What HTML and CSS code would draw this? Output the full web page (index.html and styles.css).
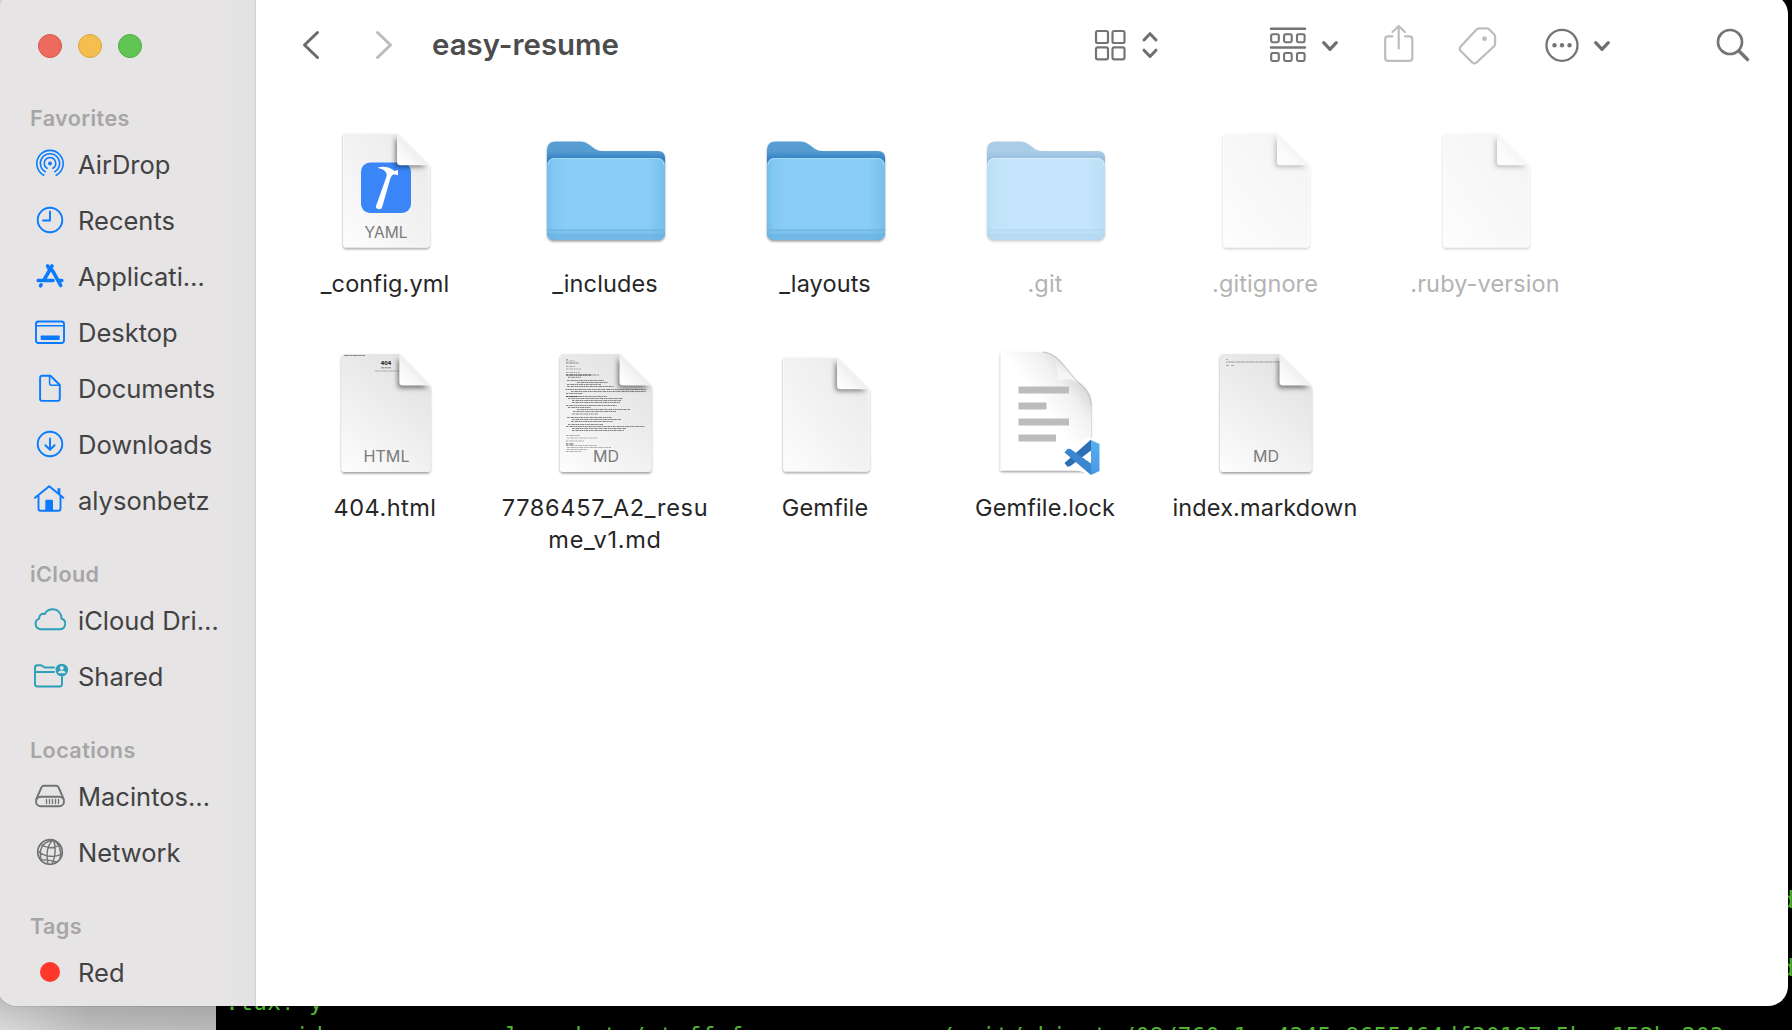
FILE: index.html
```html
<!DOCTYPE html>
<html lang="en">
<head>
<meta charset="utf-8">
<title>easy-resume</title>
<link rel="stylesheet" href="styles.css">
</head>
<body>
<svg class="defs" width="0" height="0" aria-hidden="true">
  <defs>
    <linearGradient id="paper" x1="0" y1="1" x2="1" y2="0">
      <stop offset="0" stop-color="#fdfdfd"/><stop offset=".45" stop-color="#f3f3f3"/><stop offset="1" stop-color="#e9e9e9"/>
    </linearGradient>
    <linearGradient id="thumb" x1="0" y1="1" x2=".6" y2="0">
      <stop offset="0" stop-color="#fdfdfd"/><stop offset=".3" stop-color="#f5f5f5"/><stop offset="1" stop-color="#e3e3e3"/>
    </linearGradient>
    <linearGradient id="curl" x1="0" y1="1" x2=".6" y2=".4">
      <stop offset="0" stop-color="#ffffff"/><stop offset=".5" stop-color="#f8f8f8"/><stop offset="1" stop-color="#e9e9e9"/>
    </linearGradient>
    <linearGradient id="folder-back" x1="0" y1="0" x2="0" y2="1">
      <stop offset="0" stop-color="#5a9fd3"/><stop offset=".1" stop-color="#559bd0"/><stop offset=".19" stop-color="#2f7cc2"/><stop offset="1" stop-color="#2f7cc2"/>
    </linearGradient>
    <linearGradient id="folder-front" x1="0" y1="0" x2="1" y2="0">
      <stop offset="0" stop-color="#72bdea"/><stop offset=".06" stop-color="#84c9f4"/><stop offset=".2" stop-color="#8acdf8"/><stop offset=".85" stop-color="#8acdf8"/><stop offset="1" stop-color="#76bfeb"/>
    </linearGradient>
    <linearGradient id="code-right" x1="0" y1="0" x2="0" y2="1">
      <stop offset="0" stop-color="#55b0ee"/><stop offset="1" stop-color="#4a97e6"/>
    </linearGradient>
    <linearGradient id="lock-curl" x1="0" y1="1" x2=".8" y2="0">
      <stop offset="0" stop-color="#fff"/><stop offset=".5" stop-color="#f4f4f4"/><stop offset="1" stop-color="#b8b8b8"/>
    </linearGradient>
    <linearGradient id="lock-paper" x1="0" y1="1" x2="1" y2="0">
      <stop offset=".5" stop-color="#fff"/><stop offset=".7" stop-color="#f1f1f1"/><stop offset=".85" stop-color="#d2d2d2"/>
    </linearGradient>
    <filter id="drop" x="-10%" y="-10%" width="120%" height="125%">
      <feDropShadow dx="0" dy="1.5" stdDeviation="1.1" flood-color="#000" flood-opacity=".4"/>
    </filter>
    <filter id="soft" x="-40%" y="-40%" width="180%" height="180%"><feGaussianBlur stdDeviation="2.8"/></filter>
    <clipPath id="paper-clip"><path d="M24.500 7.500H76L108 39.500V119q0 2-2 2H24.500q-2 0-2-2V9.500q0-2 2-2z"/></clipPath>
    <clipPath id="thumb-clip"><path d="M23 4H78.500L110.500 36V118.500q0 3.500-3.500 3.500H22.500q-3.500 0-3.500-3.500V7.500Q19 4 22.500 4z"/></clipPath>

    <symbol id="doc" viewBox="0 0 128 128">
      <g filter="url(#drop)"><path fill="url(#paper)" stroke="#fafafa" d="M24.500 7.500H76L108 39.500V119q0 2-2 2H24.500q-2 0-2-2V9.500q0-2 2-2z"/></g>
    </symbol>
    <symbol id="doc-fold" viewBox="0 0 128 128">
      <g clip-path="url(#paper-clip)"><path fill="#000" opacity=".5" filter="url(#soft)" d="M74.500 11V39q0 2 2 2H105z"/></g>
      <path fill="url(#curl)" d="M76 7.500L108 39.200H79.500q-3.500 0-3.500-3.500z"/>
    </symbol>
    <symbol id="sheet" viewBox="0 0 128 128">
      <g filter="url(#drop)"><path fill="url(#thumb)" d="M22.500 4H78.500L110.500 36V118.500q0 3.500-3.500 3.500H22.500q-3.500 0-3.500-3.500V7.500Q19 4 22.500 4z"/></g>
    </symbol>
    <symbol id="sheet-fold" viewBox="0 0 128 128">
      <g clip-path="url(#thumb-clip)"><path fill="#000" opacity=".5" filter="url(#soft)" d="M77 8V36q0 2 2 2H108z"/></g>
      <path fill="url(#curl)" d="M78.500 4L110.500 35.500H82q-3.500 0-3.500-3.500z"/>
    </symbol>
    <symbol id="folder" viewBox="0 0 128 128">
      <g filter="url(#drop)">
        <path fill="url(#folder-back)" d="M6 24q0-8.500 8.500-8.500H40q4 0 8 3l6 4.500q3 2 7 2H117q7 0 7 7V106q0 8-8 8H14q-8 0-8-8z"/>
        <path fill="url(#folder-front)" d="M6 40q0-8 8-8H116q8 0 8 8V106q0 8-8 8H14q-8 0-8-8z"/>
      </g>
      <path fill="none" stroke="#a4daf9" d="M7 39.500q.5-7 7-7H116q6.500 0 7 7"/>
      <path fill="#6db5e3" opacity=".45" d="M6 103H124V106q0 8-8 8H14q-8 0-8-8z"/>
      <path fill="none" stroke="#62abd9" opacity=".5" d="M6 104H124M6.500 108.500H123.500"/>
      <path fill="#5aa4d6" opacity=".3" d="M7 109H123q-2 5-7 5H14q-5 0-7-5z"/>
    </symbol>
    <symbol id="chevron" viewBox="0 0 18 12"><path fill="none" stroke="#6f6f6f" stroke-width="3.200" stroke-linecap="round" stroke-linejoin="round" d="M2.700 2.700L9 9.300L15.300 2.700"/></symbol>
  </defs>
</svg>

<div class="desktop">
  <div class="shade"></div>
  <pre class="terminal"><span class="far">d</span>

<span class="far">d</span>
.tux? y
override r--r--r-- alysonbetz/staff for easy-resume/.git/objects/08/760a1cc4345c9655464df30197a5bce152bc203</pre>

  <div class="window">
    <aside class="sidebar">
      <div class="lights"><i class="light close"></i><i class="light minimize"></i><i class="light zoom"></i></div>

      <h2>Favorites</h2>
      <ul>
        <li><svg viewBox="-16 -16 32 32"><g fill="none" stroke-width="1.600" stroke-linecap="round"><path d="M-6.200 11.200A13.200 13.200 0 1 1 6.200 11.200"/><path d="M-4.700 7.700A9.600 9.600 0 1 1 4.700 7.700"/><path d="M-3 4.300A5.800 5.800 0 1 1 3 4.300"/></g><circle cy="-.5" r="1.900" class="solid"/></svg><span>AirDrop</span></li>
        <li><svg viewBox="-16 -16 32 32"><circle r="12.300"/><path d="M0-8.500V.5H-7"/></svg><span>Recents</span></li>
        <li><svg viewBox="-16 -16 32 32"><path stroke-width="3.600" d="M2-10L-6.200 4.300M-2.400-10L-1.200-8M2.700-5.200L10.700 9.500M-8.900 8.800L-9.400 9.800M-11.800 4.500H3M8.800 4.500H11.800"/></svg><span>Applicati…</span></li>
        <li><svg viewBox="-16 -16 32 32"><rect x="-14" y="-10.500" width="28" height="21.500" rx="2.500"/><path stroke-width="1.500" d="M-14-6.300H14"/><rect class="solid" x="-9.300" y="3.500" width="19" height="4.500" rx=".7"/></svg><span>Desktop</span></li>
        <li><svg viewBox="-16 -16 32 32"><path d="M-7.700-12.300H.4L9.800-3V10.700q0 2.200-2.200 2.200H-7.700q-2.200 0-2.200-2.200V-10q0-2.300 2.200-2.300z"/><path stroke-width="1.500" d="M-.4-12V-4.800q0 2 2 2H9.500"/></svg><span>Documents</span></li>
        <li><svg viewBox="-16 -16 32 32"><circle r="12.300"/><path d="M0-5.500V5.500M-4.600 1.200L0 5.700L4.600 1.200"/></svg><span>Downloads</span></li>
        <li><svg viewBox="-16 -16 32 32"><path d="M-15-2.200L-.8-13.800L13.300-2.200M-11.500-4V8.800q0 2 2 2H8.500q2 0 2-2V-4"/><path class="solid" d="M7.500-11.800H10.300V-4L7.500-6.500zM-4.700 11V1q0-1.200 1.200-1.200H1.800Q3 -.2 3 1V11z"/></svg><span>alysonbetz</span></li>
      </ul>

      <h2>iCloud</h2>
      <ul class="teal">
        <li><svg viewBox="-16 -16 32 32"><path d="M-9.500 9.200H9.600a5.500 5.500 0 0 0 1.900-10.700C11.500-7 7.800-10.700 3-10.700C-1-10.700-3.800-8.800-5.200-6C-8.500-7-11-4.500-10.900-1.400A5.500 5.500 0 0 0-9.500 9.200z"/></svg><span>iCloud Dri…</span></li>
        <li><svg class="wide" viewBox="-16 -16 35 32"><path d="M4-8.500H-5.500L-7-9.700q-1.500-1-3-1H-12.500q-2.500 0-2.500 2.500V8q0 2.500 2.500 2.500H9.500q2.500 0 2.500-2.500V1M-15-4H4"/><circle class="solid" cx="11.800" cy="-6" r="6.300"/><circle class="paper" cx="11.800" cy="-8" r="1.900"/><path class="paper" d="M8.100-2.800q0-2.800 3.700-2.800t3.700 2.800z"/></svg><span>Shared</span></li>
      </ul>

      <h2>Locations</h2>
      <ul class="gray">
        <li><svg viewBox="-16 -16 32 32"><path d="M-13.700 3.200L-8.600-8.500q.7-1.800 2.600-1.800H6q1.900 0 2.600 1.800L13.700 3.200"/><rect x="-14" y=".8" width="28" height="9.400" rx="4.700"/><path stroke-width="1.300" d="M-3.500 3.500V7.500M-.5 3.500V7.500M2.500 3.500V7.500M5.500 3.500V7.500M8.500 3.500V7.500"/></svg><span>Macintos…</span></li>
        <li><svg viewBox="-16 -16 32 32"><g stroke-width="1.400"><circle r="12.300" stroke-width="1.700"/><path d="M3.500-12C-2-8-4.500-1-2 12M3.500-12C6-6 6 4 2 12M3-12C-8-10-12-2-8.500 8.500M3-12C9-9 12-1 10 6.500M-9.500-7.500C-3-3.500 4-3.500 10-7M-12.300-1C-5 5.500 6 6 12.300 1M-9 8C-4 7.500 3 9 6.500 10"/></g></svg><span>Network</span></li>
      </ul>

      <h2>Tags</h2>
      <ul>
        <li><i class="dot"></i><span>Red</span></li>
      </ul>
    </aside>

    <main class="main">
      <header class="toolbar">
        <svg class="back" viewBox="300 28 24 34" width="24" height="34"><path stroke="#6a6a6a" stroke-width="3" d="M317.500 32.500L304.500 45L317.500 57.500"/></svg>
        <svg class="forward" viewBox="373 28 24 34" width="24" height="34"><path stroke="#bcbcbc" stroke-width="3" d="M377.500 32.500L390.500 45L377.500 57.500"/></svg>
        <h1>easy-resume</h1>
        <svg class="view" viewBox="1093 28 68 36" width="68" height="36"><g stroke="#747474" stroke-width="2.200"><rect x="1096" y="32" width="12" height="12" rx="1.800"/><rect x="1112.500" y="32" width="12" height="12" rx="1.800"/><rect x="1096" y="48.300" width="12" height="12" rx="1.800"/><rect x="1112.500" y="48.300" width="12" height="12" rx="1.800"/></g><path stroke="#6f6f6f" stroke-width="3" d="M1144 41L1150 34.700L1156 41M1144 51.200L1150 57.500L1156 51.200"/></svg>
        <svg class="group" viewBox="1268 26 40 38" width="40" height="38"><g stroke="#747474" stroke-width="2.400"><path d="M1271 28.700H1305M1271 47.500H1305"/><g stroke-width="2.100"><rect x="1271.200" y="34.200" width="7.600" height="8" rx="1.400"/><rect x="1284.100" y="34.200" width="7.600" height="8" rx="1.400"/><rect x="1297" y="34.200" width="7.600" height="8" rx="1.400"/><rect x="1271.200" y="53" width="7.600" height="8" rx="1.400"/><rect x="1284.100" y="53" width="7.600" height="8" rx="1.400"/><rect x="1297" y="53" width="7.600" height="8" rx="1.400"/></g></g></svg>
        <svg class="chev" width="18" height="12"><use href="#chevron"/></svg>
        <svg class="share" viewBox="1382 22 34 42" width="34" height="42"><g stroke="#bdbdbd" stroke-width="2.200"><path d="M1392.500 36.300H1388q-2.800 0-2.800 2.800V58q0 2.800 2.800 2.800H1409.500q2.800 0 2.800-2.800V39.100q0-2.800-2.800-2.800H1405M1398.700 26.500V48.500M1392.500 32L1398.700 26L1404.900 32"/></g></svg>
        <svg class="tag" viewBox="1456 24 44 44" width="44" height="44"><path stroke="#bdbdbd" stroke-width="2.200" d="M1479.500 28.300H1486.500q1.600 0 2.700 1.100L1494 34.200q1.100 1.100 1.100 2.700V43.500q0 1.600-1.100 2.700L1476.700 62.400q-2.300 2-4.500 0L1460.700 51q-2-2.200 0-4.500L1476.500 29.500q1.200-1.200 3-1.200z"/><circle cx="1484.500" cy="38.700" r="2.400" fill="#bdbdbd"/></svg>
        <svg class="more" viewBox="1543 26 38 38" width="38" height="38"><circle cx="1562" cy="45.300" r="15.500" stroke="#747474" stroke-width="2.300"/><g fill="#747474"><circle cx="1554.500" cy="45.300" r="2.200"/><circle cx="1562" cy="45.300" r="2.200"/><circle cx="1569.500" cy="45.300" r="2.200"/></g></svg>
        <svg class="chev" width="18" height="12"><use href="#chevron"/></svg>
        <svg class="search" viewBox="1714 26 38 38" width="38" height="38"><circle cx="1730" cy="42" r="12" stroke="#747474" stroke-width="2.700"/><path stroke="#747474" stroke-width="3.400" d="M1739 51L1747.500 59.500"/></svg>
      </header>

      <section class="files">
        <figure><svg viewBox="0 0 128 128"><use href="#doc"/><rect x="40" y="36.500" width="50" height="50.500" rx="9" fill="#3a85f7"/><path fill="#fff" d="M57 41.500C62 39.800 68 40.800 71.500 43.500L73.500 45L77 44V49.500L74.500 48.500Q72 48 71 49.500L69.500 52L61 81.500Q60 84 57.500 83Q54.500 82.500 55 80L65 52C67 47.500 65 43.500 57 42z"/><text x="65" y="111.500" textLength="43" lengthAdjust="spacingAndGlyphs">YAML</text><use href="#doc-fold"/></svg><figcaption>_config.yml</figcaption></figure>
        <figure><svg viewBox="0 0 128 128"><use href="#folder"/></svg><figcaption>_includes</figcaption></figure>
        <figure><svg viewBox="0 0 128 128"><use href="#folder"/></svg><figcaption>_layouts</figcaption></figure>
        <figure class="hidden-file"><svg viewBox="0 0 128 128"><use href="#folder"/></svg><figcaption>.git</figcaption></figure>
        <figure class="hidden-file"><svg viewBox="0 0 128 128"><use href="#doc"/><use href="#doc-fold"/></svg><figcaption>.gitignore</figcaption></figure>
        <figure class="hidden-file"><svg viewBox="0 0 128 128"><use href="#doc"/><use href="#doc-fold"/></svg><figcaption>.ruby-version</figcaption></figure>

        <figure><svg viewBox="0 0 128 128"><g transform="translate(2 0) scale(.972 1)"><use href="#sheet" width="128" height="128"/></g><path stroke="#888" stroke-width="1" stroke-dasharray="5 .6 3 .5" d="M23 5.500H44"/><text class="tiny" x="65" y="14.500">404</text><path stroke="#777" stroke-width=".9" stroke-dasharray="3 .5" d="M60 17.800H70"/><path stroke="#999" stroke-width=".8" stroke-dasharray="4 .6 2 .6" d="M54 21H78"/><text x="65.500" y="111.500" textLength="46" lengthAdjust="spacingAndGlyphs">HTML</text><g transform="translate(2 0) scale(.972 1)"><use href="#sheet-fold" width="128" height="128"/></g></svg><figcaption class="digits">404.html</figcaption></figure>
        <figure><svg viewBox="0 0 128 128"><use href="#sheet"/>
          <g fill="none" stroke="#858585" stroke-width="1" stroke-dasharray="2 .5 1 .4 3 .6 1.500 .4">
            <path stroke="#a8a8a8" d="M25 9.500H27M25 11H34M25 16.500H34M25 19H40M25 22.500H39M25 85.500H39M25 91H43"/>
            <path d="M25 13H38M25 25H58M27 27.300H40M26 30.500H63M36 32.500H67M26 34.500H60M26 36.500H73M24.500 39.500H105M30 41.500H105M25 43.500H42"/>
            <path d="M25 46.500H66M27 48.500H82M31 50.500H80M31 52.500H79"/>
            <path d="M25 55.500H76M27 57.500H50M36 59.500H89M32 61.500H75M31 64H57M26 67.500H71M31 69.500H80M30 71.500H72"/>
            <path d="M27 74.500H62M25 76.500H104M31 78.500H85M31 80.500H83"/>
            <path stroke="#adadad" d="M26 88H56M25 95.500H56M26 97.500H70M26 99.500H46M25 101.500H40"/>
            <path stroke="#555" d="M25 25H50M25 46.500H37M25 94H33"/>
          </g>
          <text x="65" y="111.500" textLength="26" lengthAdjust="spacingAndGlyphs">MD</text><use href="#sheet-fold"/></svg><figcaption class="resume">7786457_A2_resu<br>me_v1.md</figcaption></figure>
        <figure><svg viewBox="0 0 128 128"><use href="#doc"/><use href="#doc-fold"/></svg><figcaption>Gemfile</figcaption></figure>
        <figure><svg viewBox="0 0 128 128">
          <g filter="url(#drop)"><path fill="url(#lock-paper)" d="M19.500 2H62C80 4 82 18 96 31C105 36 110 44 110 56V120.500H19.500z"/></g>
          <path fill="url(#lock-curl)" d="M62 2C72 3.500 77 14 77.500 30C84 28.500 92 28.500 99 34C87 23 80 4 62 2z"/>
          <path fill="none" stroke="#b4b4b4" stroke-width=".8" d="M62 2C79 4 86 22 99 34C106 39 110 46 110 56"/>
          <path fill="#bcbcbc" d="M37.500 36.500H88V43.500H37.500zM37.500 52.500H65.500V59.500H37.500zM37.500 68.500H88V75.500H37.500zM37.500 84.500H75V91.500H37.500z"/>
          <path fill="none" stroke="#fff" stroke-width="6" stroke-linejoin="round" d="M109 90.500L118.500 95V119L109 124L84 102L83 99z"/>
          <path fill="#fff" d="M84 97L109 91V124L84 117z"/>
          <path fill="#2b6fb4" d="M83.500 113L86.500 116.700L89.500 116L110 100.500V89.500z"/>
          <path fill="#3a87cf" d="M86.500 98.700L83.500 102.500L110 125V113.500L89.500 99z"/>
          <path fill="url(#code-right)" d="M110 90L118.500 94V121L110 125z"/>
        </svg><figcaption>Gemfile.lock</figcaption></figure>
        <figure><svg viewBox="0 0 128 128"><use href="#sheet"/><path stroke="#999" stroke-width="1.100" stroke-dasharray="1 .5 3 .4 4 .5" d="M25 12H79"/><path stroke="#aaa" stroke-width="1" stroke-dasharray="3 2" d="M25 9.500H27M25 15.500H33"/><text x="65" y="111.500" textLength="26" lengthAdjust="spacingAndGlyphs">MD</text><use href="#sheet-fold"/></svg><figcaption>index.markdown</figcaption></figure>
      </section>
    </main>
  </div>
</div>
</body>
</html>
```
FILE: styles.css
```css
* { box-sizing: border-box; }

body {
  margin: 0;
  font-family: Inter, "Liberation Sans", sans-serif;
}

h1, h2, ul, figure, pre { margin: 0; padding: 0; }
svg { display: block; flex: none; }
.defs { position: absolute; }

.desktop {
  position: relative;
  width: 1792px;
  height: 1030px;
  overflow: hidden;
  background: #e2e2e2;
}

/* shadow that the front window throws on the wallpaper */
.shade {
  position: absolute;
  left: 0;
  top: 980px;
  width: 216px;
  height: 50px;
  background:
    linear-gradient(to bottom, rgba(0, 0, 0, .12) 20px, transparent),
    linear-gradient(to right, #dadada, #bdbdbd 90px, #b9b9b9);
}

.terminal {
  position: absolute;
  left: 216px;
  top: 0;
  width: 1576px;
  height: 1100px;
  padding: 883px 0 0 9px;
  background: #000;
  color: #4fb52f;
  font: 23.270px/34px "DejaVu Sans Mono", monospace;
}

.far { padding-left: 1555px; }

.window {
  position: absolute;
  left: -3px;
  top: -6px;
  width: 1791px;
  height: 1012px;
  display: flex;
  overflow: hidden;
  border-radius: 20px;
  background: #fff;
  box-shadow: 0 0 1px rgba(0, 0, 0, .7);
}

.sidebar {
  width: 259px;
  padding: 40px 0 0 33px;
  border-right: 1px solid #d3d2d2;
  background: linear-gradient(to right, #e6e4e5 225px, #e3e2e2 258px);
}

.lights { display: flex; gap: 16px; padding-left: 8px; height: 38px; }
.light { width: 24px; height: 24px; border-radius: 50%; }
.close { background: #ed6a5e; border: 1px solid #d5564b; }
.minimize { background: #f5bf4f; border: 1px solid #dba53b; }
.zoom { background: #61c554; border: 1px solid #50a945; }

.sidebar h2 {
  height: 64px;
  padding-top: 30px;
  color: #a7a5a6;
  font-size: 21.600px;
  font-weight: 600;
  line-height: 32px;
  letter-spacing: .4px;
}

.sidebar ul { list-style: none; color: #0a7aff; }
.sidebar ul.teal { color: #2b9fb8; }
.sidebar ul.gray { color: #747373; }

.sidebar li { display: flex; align-items: center; gap: 12px; height: 56px; padding-left: 4px; }
.sidebar li svg {
  width: 32px;
  height: 32px;
  fill: none;
  stroke: currentColor;
  stroke-width: 1.900;
  stroke-linecap: round;
  stroke-linejoin: round;
}
.sidebar li svg.wide { width: 35px; margin-right: -3px; }
.sidebar .solid { fill: currentColor; stroke: none; }
.sidebar .paper { fill: #e6e4e5; stroke: none; }
.sidebar li span { color: #434243; font-size: 25.500px; white-space: nowrap; letter-spacing: 0; }
.dot { width: 20px; height: 20px; margin: 0 6px; border-radius: 50%; background: #ff382e; }

.main { flex: 1; padding: 6px 0 0; }

.toolbar { display: flex; align-items: center; height: 90px; padding-left: 44px; }
.toolbar svg { fill: none; stroke-linecap: round; stroke-linejoin: round; }
.forward { margin-left: 49px; }
.toolbar h1 {
  width: 661px;
  margin-left: 35px;
  color: #4c4c4c;
  font-size: 29.400px;
  font-weight: 600;
  line-height: 36px;
  white-space: nowrap;
}
.group { margin-left: 107px; }
.chev { margin-left: 13px; margin-top: 2px; }
.share { margin-left: 43px; margin-top: -4px; }
.tag { margin-left: 40px; margin-top: 2px; }
.more { margin-left: 43px; }
.more + .chev { margin-left: 12px; }
.search { margin-left: 103px; }

.files {
  display: grid;
  grid-template-columns: repeat(6, 220px);
  grid-auto-rows: 224px;
  padding: 36px 0 0 19px;
}

.files figure { display: flex; flex-direction: column; align-items: center; }
.files svg { width: 128px; height: 128px; }
.files svg text {
  fill: #7b7b7b;
  font-size: 16.500px;
  text-anchor: middle;
}
.files svg .tiny { fill: #222; font-size: 5px; font-weight: 800; }

figcaption {
  margin-top: 14px;
  color: #262626;
  font-size: 23.500px;
  line-height: 32px;
  letter-spacing: .12px;
  text-align: center;
  white-space: nowrap;
}
.digits { letter-spacing: .5px; }
.resume { letter-spacing: .7px; }

.hidden-file svg { opacity: .5; }
.hidden-file figcaption { color: #b3b3b3; }
```
